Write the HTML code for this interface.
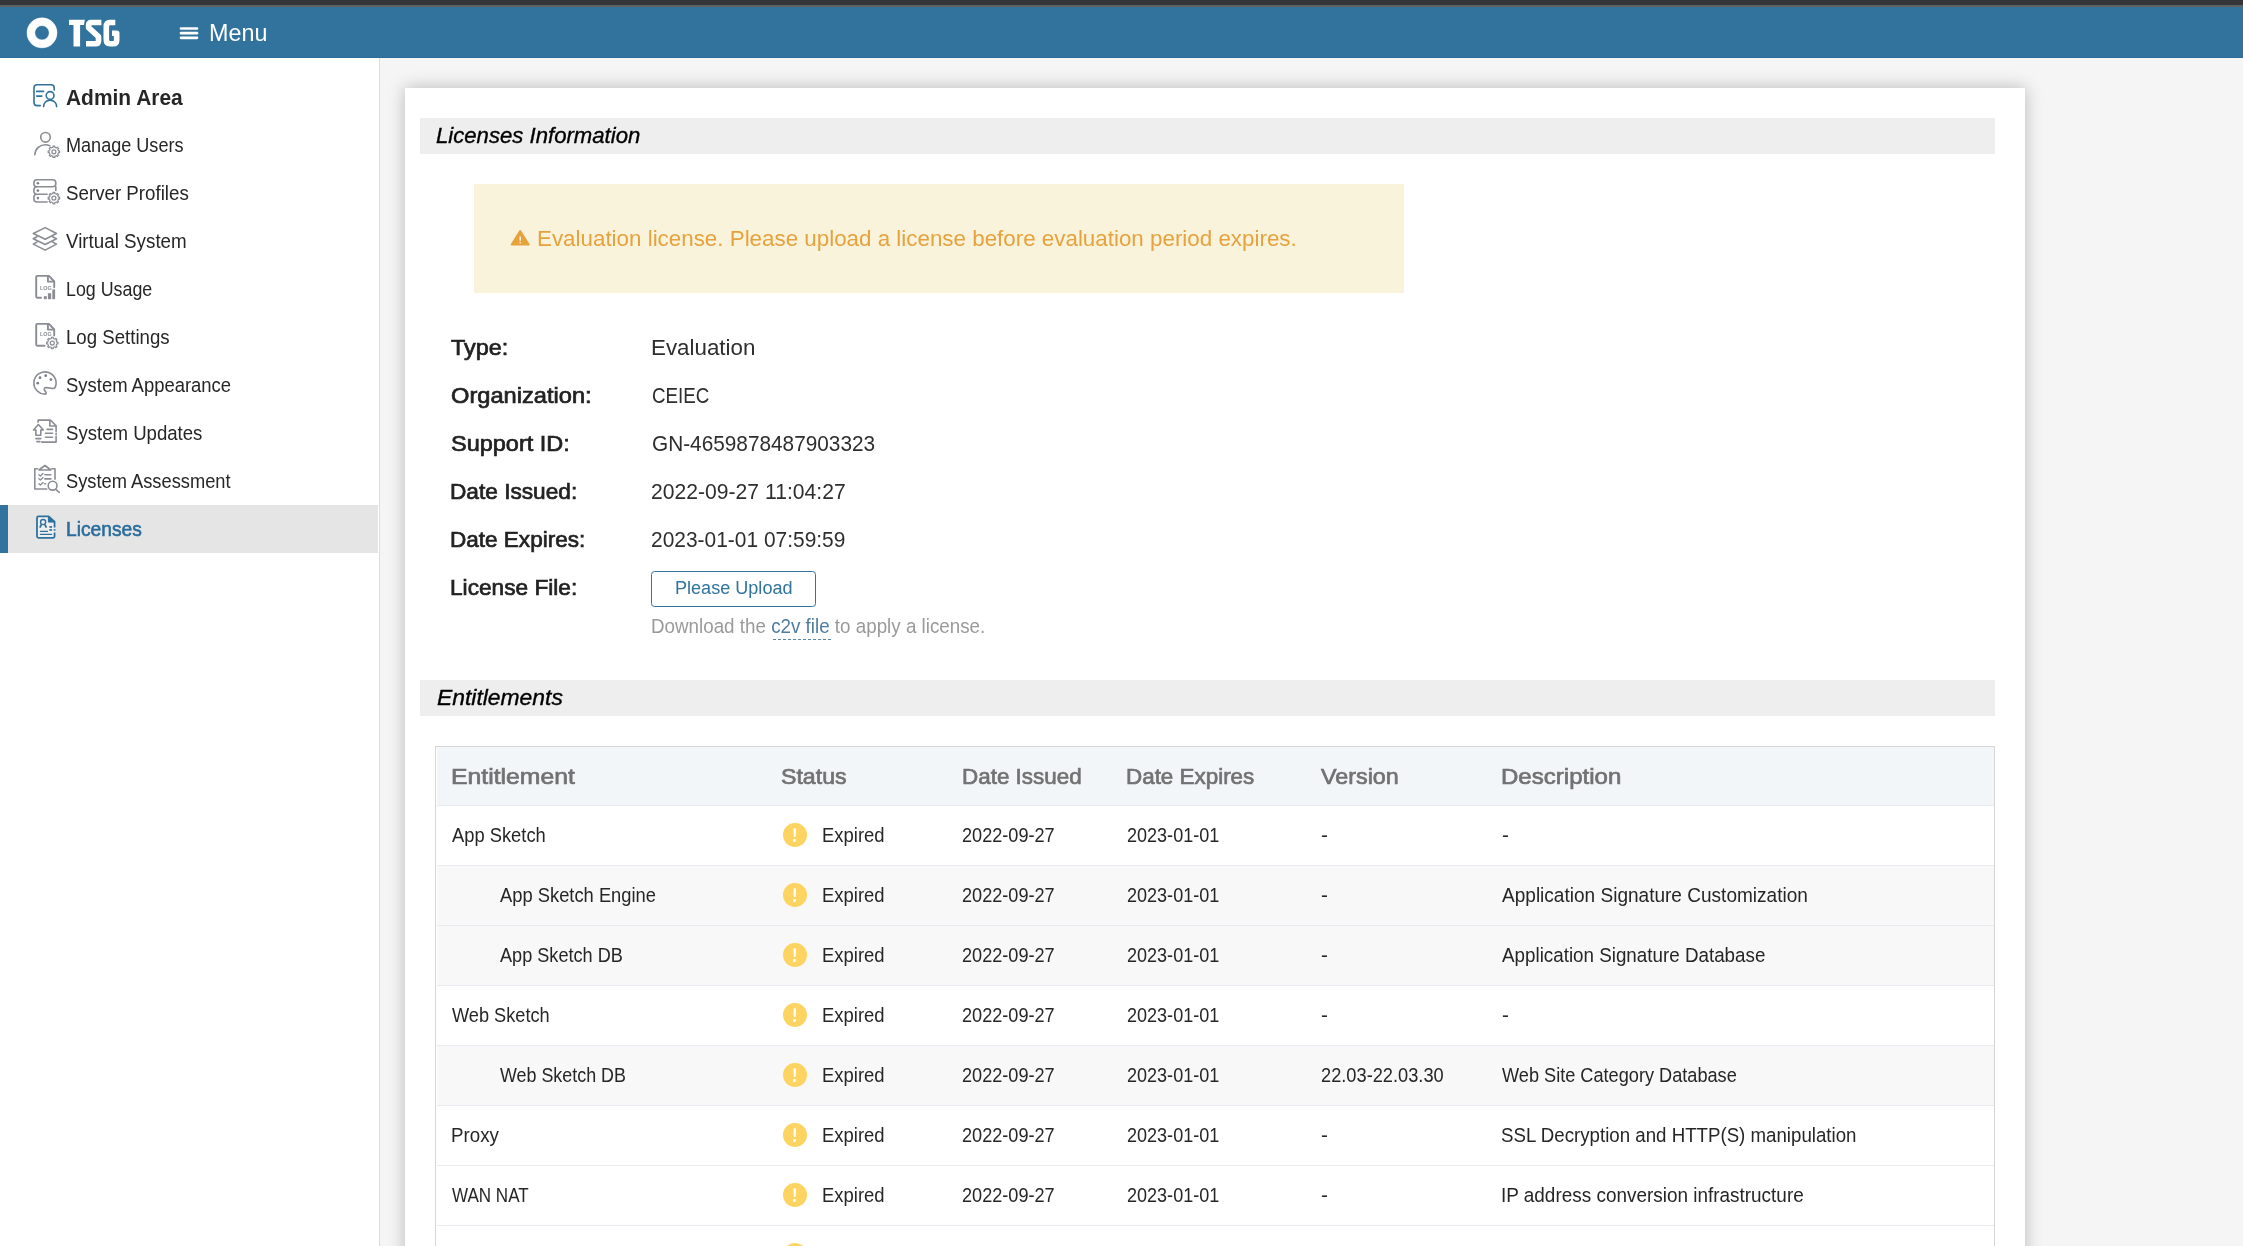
<!DOCTYPE html>
<html><head><meta charset="utf-8"><title>Licenses</title>
<style>
*{box-sizing:border-box;margin:0;padding:0}
html,body{width:2243px;height:1246px;overflow:hidden;background:#f5f5f5;font-family:"Liberation Sans",sans-serif}
body{position:relative}
.a{position:absolute}
.ti{-webkit-text-stroke:.35px #000}
.t{position:absolute;white-space:nowrap;line-height:1;transform-origin:0 0;display:block}
#topdark{left:0;top:0;width:2243px;height:5px;background:#35363a}
#topgrey{left:0;top:5px;width:2243px;height:2px;background:#616162}
#bar{left:0;top:7px;width:2243px;height:51px;background:#32739d;border-bottom:1px solid #2c6c96}
#side{left:0;top:58px;width:379px;height:1188px;background:#fff}
#sideb{left:379px;top:58px;width:1.1px;height:1188px;background:#dedede}
#act{left:0;top:505px;width:378px;height:47.8px;background:#e5e5e5;border-left:8px solid #31739d}
#card{left:405px;top:88px;width:1620px;height:1300px;background:#fff;box-shadow:0 0 16px rgba(0,0,0,.25)}
.sec{left:420px;width:1575px;height:36px;background:#eee}
#alert{left:474px;top:184px;width:930px;height:108.8px;background:#faf3dc}
#btn{left:651px;top:571px;width:165px;height:35.5px;border:1.5px solid #31739d;border-radius:3.5px;background:#fff}
#dash{left:772.5px;top:638.5px;width:58.5px;height:0;border-top:1.5px dashed #5a86a6}
#tbl{left:435px;top:746px;width:1560px;height:560px;border:1.2px solid #d6d6d6;border-bottom:none;background:#fff}
#thead{left:437px;top:747.2px;width:1556.9px;height:57.5px;background:#f3f6f9}
.rl{left:437px;width:1556.9px;height:1.3px;background:#e9ebf2}
.alt{left:437px;width:1556.9px;height:58.7px;background:#f8f8f8}
.dot{width:23.8px;height:23.8px;border-radius:50%;background:#fdd361;left:782.85px}
.dot i{position:absolute;left:10.55px;top:5.2px;width:2.7px;height:9.3px;background:#fff;border-radius:1.3px;clip-path:polygon(0 0,100% 0,82% 100%,18% 100%)}
.dot b{position:absolute;left:10.65px;top:16.3px;width:2.5px;height:2.4px;background:#fff;border-radius:50%}
svg{position:absolute;overflow:visible}

</style></head>
<body>
<div class="a" id="topdark"></div><div class="a" id="topgrey"></div>
<div class="a" id="bar"></div>
<div class="a" id="side"></div><div class="a" id="sideb"></div>
<div class="a" id="act"></div>
<div class="a" id="card"></div>
<div class="a sec" style="top:118px"></div>
<div class="a sec" style="top:680px"></div>
<div class="a" id="alert"></div>
<div class="a" id="btn"></div>
<div class="a" id="dash"></div>
<div class="a" id="tbl"></div>
<div class="a" id="thead"></div>
<div class="a rl" style="top:804.7px"></div>
<div class="a dot" style="top:823px"><i></i><b></b></div>
<div class="a alt" style="top:866.0px"></div>
<div class="a rl" style="top:864.7px"></div>
<div class="a dot" style="top:883px"><i></i><b></b></div>
<div class="a alt" style="top:926.0px"></div>
<div class="a rl" style="top:924.7px"></div>
<div class="a dot" style="top:943px"><i></i><b></b></div>
<div class="a rl" style="top:984.7px"></div>
<div class="a dot" style="top:1003px"><i></i><b></b></div>
<div class="a alt" style="top:1046.0px"></div>
<div class="a rl" style="top:1044.7px"></div>
<div class="a dot" style="top:1063px"><i></i><b></b></div>
<div class="a rl" style="top:1104.7px"></div>
<div class="a dot" style="top:1123px"><i></i><b></b></div>
<div class="a rl" style="top:1164.7px"></div>
<div class="a dot" style="top:1183px"><i></i><b></b></div>
<div class="a rl" style="top:1224.7px"></div>
<div class="a dot" style="top:1243px"><i></i><b></b></div>
<!--ICONS_START--><svg width="2243" height="1246" viewBox="0 0 2243 1246" style="left:0;top:0" fill="none" stroke-linecap="round" stroke-linejoin="round">
<defs>
<filter id="glow" x="-30%" y="-30%" width="160%" height="160%"><feGaussianBlur stdDeviation="0.7"/></filter>
<g id="gear"><path d="M-0.96 -5.72L0.96 -5.72L0.81 -4.58L2.67 -3.81L3.37 -4.72L4.72 -3.37L3.81 -2.67L4.58 -0.81L5.72 -0.96L5.72 0.96L4.58 0.81L3.81 2.67L4.72 3.37L3.37 4.72L2.67 3.81L0.81 4.58L0.96 5.72L-0.96 5.72L-0.81 4.58L-2.67 3.81L-3.37 4.72L-4.72 3.37L-3.81 2.67L-4.58 0.81L-5.72 0.96L-5.72 -0.96L-4.58 -0.81L-3.81 -2.67L-4.72 -3.37L-3.37 -4.72L-2.67 -3.81L-0.81 -4.58Z" stroke-width="1.15"/><circle r="2" stroke-width="1.25"/></g>
</defs>
<!-- logo -->
<g stroke="#fff">
<circle cx="42" cy="32.8" r="11.1" stroke-width="8.6" filter="url(#glow)" opacity=".55"/>
<circle cx="42" cy="32.8" r="11.1" stroke-width="7.8"/>
</g>
<g fill="#fff" stroke="none">
<path d="M69 19.8H84.8L84 24.9H80.1V46.5H73.5V24.9H69Z"/>
</g>
<g stroke="#fff" stroke-width="5.6" stroke-linecap="butt" stroke-linejoin="round">
<path d="M101.4 22.5H91.4Q88.6 22.5 88.6 25.2V27.6L98.5 36.6V41Q98.5 43.8 95.6 43.8H86"/>
<path d="M115.3 22.5H110Q106.3 22.5 106.3 26.4V39.8Q106.3 43.7 110 43.7H113Q116.7 43.7 116.7 39.9V33.2H112"/>
</g>
<!-- hamburger -->
<g stroke="#fff" stroke-width="2.7"><path d="M181 28.5H197M181 33.2H197M181 37.8H197"/></g>
<!-- admin area -->
<g stroke="#31739d" stroke-width="1.6">
<path d="M54.2 90V88a3.2 3.2 0 0 0-3.2-3.2H37.2a3.2 3.2 0 0 0-3.2 3.2V102.4a3.2 3.2 0 0 0 3.2 3.2H40.3"/>
<path d="M36.7 91.4H43.6M36.7 96.1H41.9"/>
<circle cx="50.1" cy="95.5" r="3.9"/>
<path d="M43.6 106.6a6.5 6.5 0 0 1 13 0"/>
</g>
<g stroke="#8a8d94" stroke-width="1.6">
<!-- manage users -->
<circle cx="45.5" cy="137.3" r="4.8"/>
<path d="M34.8 154.8C35.2 148.5 40 144.8 45.5 144.8C47 144.8 48.5 145.1 49.8 145.7"/>
<use href="#gear" x="53.9" y="151.8"/>
<!-- server profiles -->
<rect x="33.9" y="179.7" width="21.9" height="7.1" rx="3"/>
<path d="M55.8 186.8V190.4M47.1 194.3H36.9a3 3 0 0 1-3-3V189.8a3 3 0 0 1 3-3M47.1 202H36.9a3 3 0 0 1-3-3V197.3a3 3 0 0 1 3-3"/>
<g fill="#7d7f8c" stroke="none"><circle cx="37.9" cy="183.2" r="1.3"/><circle cx="37.9" cy="190.6" r="1.3"/><circle cx="37.9" cy="198.1" r="1.3"/></g>
<use href="#gear" x="53.9" y="198.1"/>
<!-- virtual system -->
<path d="M33.3 233.5L45.2 227.6L56.5 233.5L45.2 239.2Z"/>
<path d="M37 236.7L33.3 238.8L45.2 244.5L56.5 238.8L52.6 236.7"/>
<path d="M37 242L33.3 244.1L45.2 250.1L56.5 244.1L52.6 242"/>
<!-- log usage -->
<g stroke-width="1.9">
<path d="M41.1 297.8H37.4a1.2 1.2 0 0 1-1.2-1.2V277.1a1.2 1.2 0 0 1 1.2-1.2H49L54.2 281.5V287.2"/>
<path d="M47.9 276.5V281.6H54"/>
<path d="M44.6 345.8H37.4a1.2 1.2 0 0 1-1.2-1.2V325.1a1.2 1.2 0 0 1 1.2-1.2H49L54.2 329.5V335.5"/>
<path d="M47.9 324.5V329.6H54"/>
</g>
<g fill="#8a8d94" stroke="none"><rect x="43.8" y="296.2" width="3" height="3"/><rect x="47.9" y="293.2" width="3.3" height="6"/><rect x="52.3" y="289.4" width="2.8" height="9.8"/></g>
<use href="#gear" x="52.3" y="343"/>
<!-- palette -->
<path d="M45.5 394.1A11.1 11.1 0 1 1 55.6 386.3C55.2 388 54.2 388.6 52.8 388.5L46.5 387.6C44.5 387.5 43.8 388.8 44.4 390L45.9 392.3C46.4 393.3 46.2 394.1 45.5 394.1Z"/>
<g fill="#7d7f8c" stroke="none"><circle cx="37.7" cy="383.2" r="1.4"/><circle cx="40" cy="377.7" r="1.4"/><circle cx="45.7" cy="375.7" r="1.4"/><circle cx="50.9" cy="379.6" r="1.4"/></g>
<!-- updates -->
<path d="M38.1 422.2V420.1H50.4L56.1 425.7V431.5M56.1 433.3V434.5M56.1 436.4V442.1H41.6"/>
<path d="M49.8 420.6V426H55.8"/>
<path d="M47.1 429.4H52.6M45.5 433.2H52.6M45.5 437.2H52.6"/>
<path d="M38.4 424.5L43.3 430H40.8V435.3H35.9V430H33.5Z"/>
<path d="M35.9 438.6H40.8M36.9 441.6H39.9"/>
<!-- assessment -->
<path d="M37.5 468.8H34.8V489H46.8M52 468.8H55V479.2"/>
<path d="M38.9 470L44.9 465.5L50.9 470Z"/>
<path d="M38.9 474.7L40.4 476L43 473.4M38.9 478.8L40.4 480.1L43 477.5M38.9 483.7L40.4 485L43 482.4" stroke-width="1.35"/>
<path d="M44.9 474.8H50.9M44.9 478.9H50.9M44.6 483.8H45.6"/>
<circle cx="52.6" cy="485.7" r="4.4"/>
<path d="M55.8 489.4L59.3 492.3"/>
</g>
<!-- licenses -->
<g stroke="#2e72a0" stroke-width="1.8" stroke-linecap="butt">
<path d="M54.55 527.5V521.7L48.7 516.4H38.5a1.5 1.5 0 0 0-1.5 1.5V536.3a1.5 1.5 0 0 0 1.5 1.5H53.05a1.5 1.5 0 0 0 1.5-1.5V532.4" fill="#efefef"/>
<path d="M54.55 529.1V530.7"/>
<path d="M48.4 516.8V522.1H54.2Z" fill="#2e72a0" stroke-width="1"/>
<circle cx="43.1" cy="522.1" r="2.55" stroke-width="1.4"/>
<path d="M41.3 524.6L39.9 527.7M44.9 524.6L46.4 527.7" stroke-width="1.8"/>
<path d="M40.4 531.4H47.5M40.4 534.4H51.6" stroke-width="1.2" stroke-linecap="round"/>
<g fill="#2e72a0" stroke="none"><rect x="49.3" y="526.1" width="2.8" height="1.7"/><rect x="49.3" y="529.1" width="2.8" height="1.7"/></g>
</g>
<!-- alert triangle -->
<path d="M520.2 230.8L529 244.6H511.4Z" fill="#e6a23c" stroke="#e6a23c" stroke-width="1.6"/>
<path d="M520.2 236.4V240.8" stroke="#faf3dc" stroke-width="1.5" stroke-linecap="butt"/>
<rect x="519.45" y="242" width="1.5" height="1.3" fill="#faf3dc"/>
</svg>
<!--ICONS_END-->

<span class="t" style="left:208.50px;top:22.00px;font-size:23.2px;color:#fff;transform:scaleX(1.0066);">Menu</span>
<span class="t" style="left:39.53px;top:285.10px;font-size:6.2px;color:#8a8d94;transform:scaleX(0.8750);font-weight:700;">LOG</span>
<span class="t" style="left:39.53px;top:330.90px;font-size:6.2px;color:#8a8d94;transform:scaleX(0.8750);font-weight:700;">LOG</span>
<span class="t" style="left:66.09px;top:86.60px;font-size:22.2px;color:#262626;transform:scaleX(0.9435);font-weight:700;">Admin Area</span>
<span class="t" style="left:65.59px;top:136.00px;font-size:19.3px;color:#262626;transform:scaleX(0.9372);">Manage Users</span>
<span class="t" style="left:65.90px;top:184.00px;font-size:19.3px;color:#262626;transform:scaleX(0.9712);">Server Profiles</span>
<span class="t" style="left:66.38px;top:232.00px;font-size:19.3px;color:#262626;transform:scaleX(0.9736);">Virtual System</span>
<span class="t" style="left:66.33px;top:280.00px;font-size:19.3px;color:#262626;transform:scaleX(0.9248);">Log Usage</span>
<span class="t" style="left:66.26px;top:328.00px;font-size:19.3px;color:#262626;transform:scaleX(0.9666);">Log Settings</span>
<span class="t" style="left:66.10px;top:376.00px;font-size:19.3px;color:#262626;transform:scaleX(0.9568);">System Appearance</span>
<span class="t" style="left:66.10px;top:424.00px;font-size:19.3px;color:#262626;transform:scaleX(0.9644);">System Updates</span>
<span class="t" style="left:66.10px;top:472.00px;font-size:19.3px;color:#262626;transform:scaleX(0.9479);">System Assessment</span>
<span class="t" style="left:66.03px;top:519.80px;font-size:19.3px;color:#2a6c9b;transform:scaleX(0.9964);-webkit-text-stroke:0.55px #2a6c9b;">Licenses</span>
<span class="t ti" style="left:436.08px;top:125.20px;font-size:22.2px;color:#000;transform:scaleX(0.9980);font-style:italic;">Licenses Information</span>
<span class="t ti" style="left:436.62px;top:687.20px;font-size:22.2px;color:#000;transform:scaleX(1.0309);font-style:italic;">Entitlements</span>
<span class="t" style="left:451.41px;top:336.60px;font-size:22.2px;color:#222;transform:scaleX(1.0532);-webkit-text-stroke:0.7px #222;">Type:</span>
<span class="t" style="left:450.75px;top:384.60px;font-size:22.2px;color:#222;transform:scaleX(1.0655);-webkit-text-stroke:0.7px #222;">Organization:</span>
<span class="t" style="left:450.73px;top:432.60px;font-size:22.2px;color:#222;transform:scaleX(1.0582);-webkit-text-stroke:0.7px #222;">Support ID:</span>
<span class="t" style="left:450.18px;top:480.60px;font-size:22.2px;color:#222;transform:scaleX(1.0214);-webkit-text-stroke:0.7px #222;">Date Issued:</span>
<span class="t" style="left:450.20px;top:528.60px;font-size:22.2px;color:#222;transform:scaleX(1.0154);-webkit-text-stroke:0.7px #222;">Date Expires:</span>
<span class="t" style="left:450.18px;top:576.60px;font-size:22.2px;color:#222;transform:scaleX(1.0215);-webkit-text-stroke:0.7px #222;">License File:</span>
<span class="t" style="left:650.99px;top:336.60px;font-size:22.2px;color:#2e2e2e;transform:scaleX(1.0073);">Evaluation</span>
<span class="t" style="left:651.85px;top:384.60px;font-size:22.2px;color:#2e2e2e;transform:scaleX(0.8461);">CEIEC</span>
<span class="t" style="left:651.72px;top:432.60px;font-size:22.2px;color:#2e2e2e;transform:scaleX(0.9371);">GN-4659878487903323</span>
<span class="t" style="left:650.63px;top:480.60px;font-size:22.2px;color:#2e2e2e;transform:scaleX(0.9524);">2022-09-27 11:04:27</span>
<span class="t" style="left:650.64px;top:528.60px;font-size:22.2px;color:#2e2e2e;transform:scaleX(0.9435);">2023-01-01 07:59:59</span>
<span class="t" style="left:675.42px;top:579.10px;font-size:18px;color:#31739d;transform:scaleX(1.0039);">Please Upload</span>
<span class="t" style="left:651.35px;top:616.80px;font-size:19.3px;color:#9a9a9a;transform:scaleX(0.9746);">Download the <span style="color:#4f7d9f">c2v file</span> to apply a license.</span>
<span class="t" style="left:536.95px;top:227.90px;font-size:22.5px;color:#e6a23c;transform:scaleX(0.9941);">Evaluation license. Please upload a license before evaluation period expires.</span>
<span class="t" style="left:451.18px;top:766.10px;font-size:22.2px;color:#727272;transform:scaleX(1.1152);-webkit-text-stroke:0.7px #727272;">Entitlement</span>
<span class="t" style="left:781.24px;top:766.10px;font-size:22.2px;color:#727272;transform:scaleX(1.0426);-webkit-text-stroke:0.7px #727272;">Status</span>
<span class="t" style="left:961.58px;top:766.10px;font-size:22.2px;color:#727272;transform:scaleX(1.0109);-webkit-text-stroke:0.7px #727272;">Date Issued</span>
<span class="t" style="left:1126.22px;top:766.10px;font-size:22.2px;color:#727272;transform:scaleX(1.0097);-webkit-text-stroke:0.7px #727272;">Date Expires</span>
<span class="t" style="left:1321.29px;top:766.10px;font-size:22.2px;color:#727272;transform:scaleX(1.0511);-webkit-text-stroke:0.7px #727272;">Version</span>
<span class="t" style="left:1500.52px;top:766.10px;font-size:22.2px;color:#727272;transform:scaleX(1.0842);-webkit-text-stroke:0.7px #727272;">Description</span>
<span class="t" style="left:451.88px;top:826.30px;font-size:19.3px;color:#262626;transform:scaleX(0.9510);">App Sketch</span>
<span class="t" style="left:821.91px;top:826.30px;font-size:19.3px;color:#262626;transform:scaleX(0.9568);">Expired</span>
<span class="t" style="left:961.76px;top:826.30px;font-size:19.3px;color:#262626;transform:scaleX(0.9393);">2022-09-27</span>
<span class="t" style="left:1126.94px;top:826.30px;font-size:19.3px;color:#262626;transform:scaleX(0.9354);">2023-01-01</span>
<span class="t" style="left:1321.46px;top:826.30px;font-size:19.3px;color:#262626;transform:scaleX(1.0724);">-</span>
<span class="t" style="left:1502.00px;top:826.30px;font-size:19.3px;color:#262626;transform:scaleX(1.0724);">-</span>
<span class="t" style="left:499.70px;top:886.30px;font-size:19.3px;color:#262626;transform:scaleX(0.9511);">App Sketch Engine</span>
<span class="t" style="left:821.91px;top:886.30px;font-size:19.3px;color:#262626;transform:scaleX(0.9568);">Expired</span>
<span class="t" style="left:961.76px;top:886.30px;font-size:19.3px;color:#262626;transform:scaleX(0.9393);">2022-09-27</span>
<span class="t" style="left:1126.94px;top:886.30px;font-size:19.3px;color:#262626;transform:scaleX(0.9354);">2023-01-01</span>
<span class="t" style="left:1321.46px;top:886.30px;font-size:19.3px;color:#262626;transform:scaleX(1.0725);">-</span>
<span class="t" style="left:1502.23px;top:886.30px;font-size:19.3px;color:#262626;transform:scaleX(0.9876);">Application Signature Customization</span>
<span class="t" style="left:499.70px;top:946.30px;font-size:19.3px;color:#262626;transform:scaleX(0.9395);">App Sketch DB</span>
<span class="t" style="left:821.91px;top:946.30px;font-size:19.3px;color:#262626;transform:scaleX(0.9568);">Expired</span>
<span class="t" style="left:961.76px;top:946.30px;font-size:19.3px;color:#262626;transform:scaleX(0.9393);">2022-09-27</span>
<span class="t" style="left:1126.94px;top:946.30px;font-size:19.3px;color:#262626;transform:scaleX(0.9354);">2023-01-01</span>
<span class="t" style="left:1321.46px;top:946.30px;font-size:19.3px;color:#262626;transform:scaleX(1.0725);">-</span>
<span class="t" style="left:1502.24px;top:946.30px;font-size:19.3px;color:#262626;transform:scaleX(0.9750);">Application Signature Database</span>
<span class="t" style="left:451.88px;top:1006.30px;font-size:19.3px;color:#262626;transform:scaleX(0.9425);">Web Sketch</span>
<span class="t" style="left:821.91px;top:1006.30px;font-size:19.3px;color:#262626;transform:scaleX(0.9568);">Expired</span>
<span class="t" style="left:961.76px;top:1006.30px;font-size:19.3px;color:#262626;transform:scaleX(0.9393);">2022-09-27</span>
<span class="t" style="left:1126.94px;top:1006.30px;font-size:19.3px;color:#262626;transform:scaleX(0.9354);">2023-01-01</span>
<span class="t" style="left:1321.46px;top:1006.30px;font-size:19.3px;color:#262626;transform:scaleX(1.0724);">-</span>
<span class="t" style="left:1502.00px;top:1006.30px;font-size:19.3px;color:#262626;transform:scaleX(1.0724);">-</span>
<span class="t" style="left:499.70px;top:1066.30px;font-size:19.3px;color:#262626;transform:scaleX(0.9280);">Web Sketch DB</span>
<span class="t" style="left:821.91px;top:1066.30px;font-size:19.3px;color:#262626;transform:scaleX(0.9568);">Expired</span>
<span class="t" style="left:961.76px;top:1066.30px;font-size:19.3px;color:#262626;transform:scaleX(0.9393);">2022-09-27</span>
<span class="t" style="left:1126.94px;top:1066.30px;font-size:19.3px;color:#262626;transform:scaleX(0.9354);">2023-01-01</span>
<span class="t" style="left:1321.22px;top:1066.30px;font-size:19.3px;color:#262626;transform:scaleX(0.9458);">22.03-22.03.30</span>
<span class="t" style="left:1502.24px;top:1066.30px;font-size:19.3px;color:#262626;transform:scaleX(0.9414);">Web Site Category Database</span>
<span class="t" style="left:450.70px;top:1126.30px;font-size:19.3px;color:#262626;transform:scaleX(0.9711);">Proxy</span>
<span class="t" style="left:821.91px;top:1126.30px;font-size:19.3px;color:#262626;transform:scaleX(0.9568);">Expired</span>
<span class="t" style="left:961.76px;top:1126.30px;font-size:19.3px;color:#262626;transform:scaleX(0.9393);">2022-09-27</span>
<span class="t" style="left:1126.94px;top:1126.30px;font-size:19.3px;color:#262626;transform:scaleX(0.9354);">2023-01-01</span>
<span class="t" style="left:1321.46px;top:1126.30px;font-size:19.3px;color:#262626;transform:scaleX(1.0724);">-</span>
<span class="t" style="left:1501.42px;top:1126.30px;font-size:19.3px;color:#262626;transform:scaleX(0.9689);">SSL Decryption and HTTP(S) manipulation</span>
<span class="t" style="left:451.90px;top:1186.30px;font-size:19.3px;color:#262626;transform:scaleX(0.8841);">WAN NAT</span>
<span class="t" style="left:821.91px;top:1186.30px;font-size:19.3px;color:#262626;transform:scaleX(0.9568);">Expired</span>
<span class="t" style="left:961.76px;top:1186.30px;font-size:19.3px;color:#262626;transform:scaleX(0.9393);">2022-09-27</span>
<span class="t" style="left:1126.94px;top:1186.30px;font-size:19.3px;color:#262626;transform:scaleX(0.9354);">2023-01-01</span>
<span class="t" style="left:1321.46px;top:1186.30px;font-size:19.3px;color:#262626;transform:scaleX(1.0724);">-</span>
<span class="t" style="left:1500.88px;top:1186.30px;font-size:19.3px;color:#262626;transform:scaleX(0.9819);">IP address conversion infrastructure</span>
</body></html>
